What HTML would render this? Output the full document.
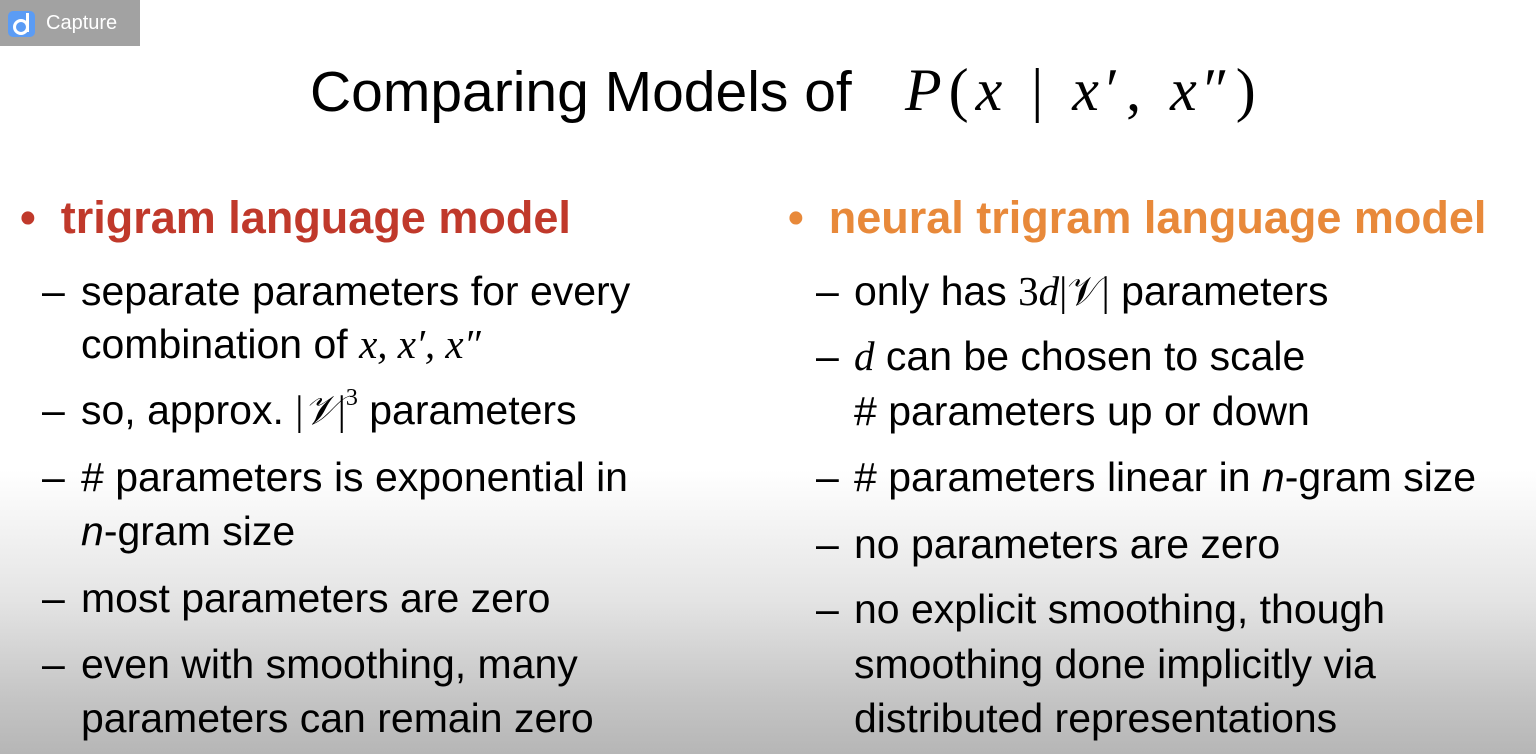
<!DOCTYPE html>
<html><head><meta charset="utf-8"><style>
body{margin:0;width:1536px;height:754px;overflow:hidden;position:relative;
background:linear-gradient(to bottom,#fff 0px,#fff 470px,#e4e4e4 600px,#c4c4c4 700px,#b6b6b6 754px);
font-family:"Liberation Sans",sans-serif;color:#000}
.t{position:absolute;white-space:nowrap;font-size:41px;line-height:44px}
.d{position:absolute;font-size:41px;line-height:44px}
.m{font-family:"Liberation Serif",serif;font-style:italic}
.h{font-weight:bold;font-size:45px}
sup{line-height:0;position:relative;top:-4px}
#cap{position:absolute;left:0;top:0;width:140px;height:46px;background:#a2a2a2;color:#fff;font-size:20px}
</style></head><body>
<div id="cap"><div style="position:absolute;left:8px;top:11px;width:27px;height:26px;border-radius:5px;background:#5b9cf5"></div>
<div style="position:absolute;left:13px;top:19px;width:10px;height:10px;border:3px solid #fff;border-radius:50%"></div>
<div style="position:absolute;left:26px;top:13px;width:3px;height:19px;background:#fff"></div>
<span style="position:absolute;left:46px;top:12px">Capture</span></div>

<div class="t" style="left:310px;top:60px;font-size:57px;line-height:64px">Comparing Models of</div>
<div class="t" style="left:905px;top:58px;font-size:60px;line-height:64px;letter-spacing:7px;font-family:'Liberation Serif',serif"><i>P</i>(<i>x</i> | <i>x</i>′, <i>x</i>″)</div>

<div class="t h" style="left:20px;top:196px;color:#c0392b">•&nbsp;&nbsp;trigram language model</div>
<div class="d" style="left:42px;top:269px">–</div><div class="t" style="left:81px;top:269px">separate parameters for every</div>
<div class="t" style="left:81px;top:322px">combination of <span class="m">x, x′, x″</span></div>
<div class="d" style="left:42px;top:388px">–</div><div class="t" style="left:81px;top:388px">so, approx. <span style="font-family:'Liberation Serif',serif">|<i>𝒱</i>|<sup style="font-size:24px">3</sup></span> parameters</div>
<div class="d" style="left:42px;top:455px">–</div><div class="t" style="left:81px;top:455px"># parameters is exponential in</div>
<div class="t" style="left:81px;top:509px"><i>n</i>-gram size</div>
<div class="d" style="left:42px;top:576px">–</div><div class="t" style="left:81px;top:576px">most parameters are zero</div>
<div class="d" style="left:42px;top:642px">–</div><div class="t" style="left:81px;top:642px">even with smoothing, many</div>
<div class="t" style="left:81px;top:696px">parameters can remain zero</div>

<div class="t h" style="left:788px;top:196px;color:#e8893a">•&nbsp;&nbsp;neural trigram language model</div>
<div class="d" style="left:816px;top:269px">–</div><div class="t" style="left:854px;top:269px">only has <span style="font-family:'Liberation Serif',serif">3<i>d</i>|𝒱|</span> parameters</div>
<div class="d" style="left:816px;top:334px">–</div><div class="t" style="left:854px;top:334px"><span class="m">d</span> can be chosen to scale</div>
<div class="t" style="left:854px;top:389px"># parameters up or down</div>
<div class="d" style="left:816px;top:455px">–</div><div class="t" style="left:854px;top:455px"># parameters linear in <i>n</i>-gram size</div>
<div class="d" style="left:816px;top:522px">–</div><div class="t" style="left:854px;top:522px">no parameters are zero</div>
<div class="d" style="left:816px;top:587px">–</div><div class="t" style="left:854px;top:587px">no explicit smoothing, though</div>
<div class="t" style="left:854px;top:642px">smoothing done implicitly via</div>
<div class="t" style="left:854px;top:696px">distributed representations</div>
</body></html>
